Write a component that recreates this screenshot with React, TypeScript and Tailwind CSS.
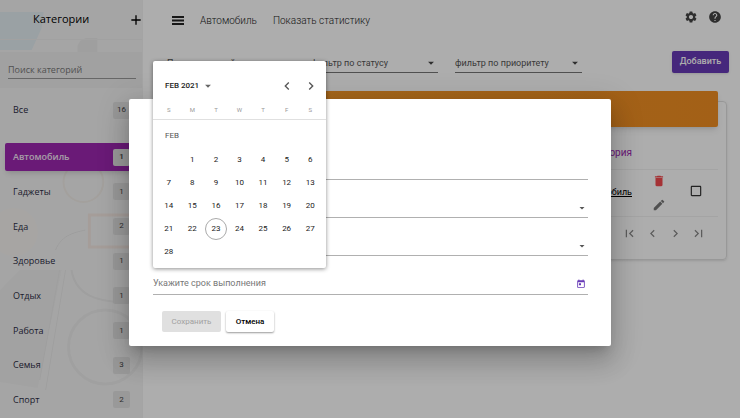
import React from "react";
import {
  MdAdd,
  MdArrowDropDown,
  MdCheckBoxOutlineBlank,
  MdChevronLeft,
  MdChevronRight,
  MdDelete,
  MdEdit,
  MdFirstPage,
  MdHelp,
  MdLastPage,
  MdSettings,
  MdToday,
} from "react-icons/md";

const categories = [
  { name: "Автомобиль", count: 1, active: true },
  { name: "Гаджеты", count: 1 },
  { name: "Еда", count: 2 },
  { name: "Здоровье", count: 1 },
  { name: "Отдых", count: 1 },
  { name: "Работа", count: 1 },
  { name: "Семья", count: 3 },
  { name: "Спорт", count: 2 },
];

const days = Array.from({ length: 28 }, (_, i) => i + 1);

function Count({ value }: { value: number }) {
  return (
    <span className="flex h-[17px] w-[17px] items-center justify-center rounded-xs bg-[#e2e2e2] font-[Roboto,sans-serif] text-[8px] text-[#444]">
      {value}
    </span>
  );
}

function SidebarArt() {
  return (
    <svg
      className="absolute inset-0 h-full w-full"
      viewBox="0 0 143 418"
      preserveAspectRatio="none"
      fill="none"
      aria-hidden="true"
    >
      <path d="M0 12h44l-2 16-10 22H0z" fill="#e4eef2" />
      <path d="M78 46c2-6 6-8 10-8h10v14H78z" fill="#ebebeb" />
      <path d="M20 270h42L38 388 0 382V290z" fill="#efefef" />
      <path d="M66 270L46 390M60 270L40 380" stroke="#eaeaea" />
      <path d="M143 215H90v32h53" stroke="#f4e7e2" strokeWidth="3" />
      <path d="M72 270c4 24 24 33 58 32" stroke="#eaeaea" strokeWidth="2" />
      <circle cx="106" cy="347" r="37" stroke="#ececec" strokeWidth="3" />
      <path d="M56 250c6-16 22-18 30-20" stroke="#e8e8e8" />
      <circle cx="84" cy="182" r="20" stroke="#f0ece7" strokeWidth="2" />
      <circle cx="14" cy="232" r="24" fill="#f6f4f0" />
    </svg>
  );
}

function Sidebar() {
  return (
    <aside className="relative w-[143px] shrink-0 overflow-hidden border-r border-[#f2f2f2] bg-[#f4f4f4] font-['Open_Sans','Noto_Sans',sans-serif] text-[#2c2c44]">
      <SidebarArt />
      <div className="relative">
        <div className="flex h-10 items-center justify-between border-b border-[#eeeeee] pl-[33px]">
          <h1 className="text-[11px] font-normal text-black">Категории</h1>
          <button aria-label="Добавить категорию" className="-mr-0.5 text-black">
            <MdAdd className="h-4 w-4" />
          </button>
        </div>
        <div className="mt-3 h-9 bg-[#eeeeee] px-2">
          <input
            aria-label="Поиск категорий"
            placeholder="Поиск категорий"
            className="h-[27px] w-32 border-b border-[#999] bg-transparent pt-2 text-[9px] outline-none placeholder:text-[#777]"
          />
        </div>
        <a href="#all" className="mt-2 flex h-7 items-center justify-between pr-[12px] pl-[13px] text-[9px]">
          Все <Count value={16} />
        </a>
        <nav className="mt-[19px] flex h-[271px] flex-col justify-between pr-1 pl-[5px]">
          {categories.map((c) => (
            <a
              key={c.name}
              href={"#" + c.name}
              className={
                c.active
                  ? "flex h-7 items-center justify-between rounded-xs bg-[#9c27b0] pr-2 pl-2 text-[9px] font-semibold text-[#f4e6f6] shadow-md"
                  : "flex h-7 items-center justify-between pr-2 pl-2 text-[9px]"
              }
            >
              {c.name}
              <Count value={c.count} />
            </a>
          ))}
        </nav>
      </div>
    </aside>
  );
}

function Filter({ label }: { label: string }) {
  return (
    <div className="relative w-[127px] border-b border-[#777]">
      <select
        aria-label={label}
        className="block h-[18px] w-full appearance-none bg-transparent text-[9px] leading-[18px] text-[#555] outline-none"
      >
        <option>{label}</option>
      </select>
      <MdArrowDropDown className="pointer-events-none absolute top-[2px] right-0 h-[14px] w-[14px] text-[#444]" />
    </div>
  );
}

function MenuIcon() {
  return (
    <svg viewBox="0 0 12 9" className="h-[9px] w-3" fill="currentColor" aria-hidden="true">
      <path d="M0 0h12v2H0zM0 3.5h12v2H0zM0 7h12v2H0z" />
    </svg>
  );
}

function Main() {
  return (
    <main className="flex-1 overflow-hidden pr-[13px] pl-4">
      <header className="flex h-10 items-center gap-4 pl-[13px] text-[10px] font-light text-[#222]">
        <button aria-label="Меню" className="text-[#222]">
          <MenuIcon />
        </button>
        <span>Автомобиль</span>
        <a href="#stats">Показать статистику</a>
        <div className="ml-auto flex gap-2.5 pr-[5px] pb-[7px] text-[#444]">
          <button aria-label="Настройки">
            <MdSettings className="h-3.5 w-3.5" />
          </button>
          <button aria-label="Помощь">
            <MdHelp className="h-3.5 w-3.5" />
          </button>
        </div>
      </header>

      <div className="flex h-[33px] items-end gap-[17px] pl-2">
        <input
          aria-label="Поиск значений"
          placeholder="Поиск значений"
          className="h-[19px] w-[127px] border-b border-[#777] bg-transparent text-[9px] outline-none placeholder:text-[#555]"
        />
        <Filter label="фильтр по статусу" />
        <Filter label="фильтр по приоритету" />
        <button className="-mr-0.5 ml-auto h-[22px] w-[57px] rounded-xs bg-[#673ab7] text-[9px] font-medium text-white shadow-sm">
          Добавить
        </button>
      </div>

      <section className="mt-7 rounded-sm border border-[#e0e0e0] px-2 shadow-sm">
        <div className="-mt-[11px] h-9 rounded-xs bg-linear-to-r from-[#f39a2b] to-[#f18e22] shadow-md" />
        <table className="w-full text-[10px]">
          <thead>
            <tr className="h-[42px] border-b border-[#f2f2f2] text-[#9c27b0]">
              <th className="pt-2.5 text-right font-normal">Категория</th>
              <th className="w-[54px]" />
              <th className="w-8" />
            </tr>
          </thead>
          <tbody>
            <tr className="h-[47px] border-b border-[#f2f2f2]">
              <td className="text-right text-[9px] text-black underline">Автомобиль</td>
              <td>
                <div className="flex flex-col items-center gap-2.5">
                  <button aria-label="Удалить">
                    <MdDelete className="h-3.5 w-3.5 text-[#f44a4f]" />
                  </button>
                  <button aria-label="Изменить">
                    <MdEdit className="h-3.5 w-3.5 text-[#777]" />
                  </button>
                </div>
              </td>
              <td>
                <button aria-label="Выполнено" className="block pb-1 pl-[3px]">
                  <MdCheckBoxOutlineBlank className="h-3.5 w-3.5 text-[#333]" />
                </button>
              </td>
            </tr>
          </tbody>
        </table>
        <div className="flex h-[42px] items-center justify-end gap-2 pr-3 pb-2 text-[#888]">
          <button aria-label="Первая страница"><MdFirstPage className="h-[15px] w-[15px]" /></button>
          <button aria-label="Предыдущая страница"><MdChevronLeft className="h-[15px] w-[15px]" /></button>
          <button aria-label="Следующая страница"><MdChevronRight className="h-[15px] w-[15px]" /></button>
          <button aria-label="Последняя страница"><MdLastPage className="h-[15px] w-[15px]" /></button>
        </div>
      </section>
    </main>
  );
}

function DialogSelect({ label }: { label: string }) {
  return (
    <div className="relative mt-[18px] border-b border-[#b0b0b0]">
      <select aria-label={label} className="block h-[19px] w-full appearance-none outline-none" />
      <MdArrowDropDown className="pointer-events-none absolute right-0 bottom-[3px] h-3 w-3 text-[#555]" />
    </div>
  );
}

function Calendar() {
  return (
    <div className="absolute bottom-[78px] left-6 h-[207px] w-[173px] rounded-xs bg-white text-[8px] text-[#222] shadow-[0_1px_4px_rgba(0,0,0,0.45)]">
      <div className="flex h-[46px] items-center pt-[3px] pr-[7px] pl-3">
        <button type="button" className="flex items-center font-medium">
          FEB 2021
          <MdArrowDropDown className="ml-0.5 h-3.5 w-3.5 text-[#666]" />
        </button>
        <button type="button" aria-label="Предыдущий месяц" className="ml-auto text-[#555]">
          <MdChevronLeft className="h-4 w-4" />
        </button>
        <button type="button" aria-label="Следующий месяц" className="ml-2 text-[#555]">
          <MdChevronRight className="h-4 w-4" />
        </button>
      </div>
      <div className="grid h-[13px] grid-cols-7 border-b border-[#e0e0e0] px-1 text-center text-[6px] leading-none text-[#999]">
        {["S", "M", "T", "W", "T", "F", "S"].map((d, i) => (
          <span key={i}>{d}</span>
        ))}
      </div>
      <div className="px-3 pt-2.5 leading-3 text-[#555]">FEB</div>
      <div className="grid grid-cols-7 px-1 pt-1.5">
        {days.map((d) => (
          <button
            key={d}
            type="button"
            className={
              d === 1
                ? "col-start-2 flex h-[23px] items-center justify-center"
                : "flex h-[23px] items-center justify-center"
            }
          >
            {d === 23 ? (
              <span className="flex h-[22px] w-[22px] shrink-0 items-center justify-center rounded-full border border-[#aaa]">
                {d}
              </span>
            ) : (
              d
            )}
          </button>
        ))}
      </div>
    </div>
  );
}

function TaskDialog() {
  return (
    <div className="absolute inset-0 flex items-start bg-black/32 px-[129px] pt-[99px]">
      <form
        role="dialog"
        aria-label="Задача"
        className="relative flex-1 rounded-xs bg-white pt-[61px] pr-[23px] pb-[14px] pl-6 shadow-[0_7px_10px_-5px_rgba(0,0,0,0.2),0_16px_25px_2px_rgba(0,0,0,0.14),0_6px_31px_5px_rgba(0,0,0,0.12)]"
      >
        <input aria-label="Название" className="block h-5 w-full border-b border-[#b0b0b0] outline-none" />
        <DialogSelect label="Категория" />
        <DialogSelect label="Приоритет" />
        <div className="mt-[18px] flex h-[21px] items-center border-b border-[#b0b0b0] pr-[2px]">
          <input
            aria-label="Укажите срок выполнения"
            placeholder="Укажите срок выполнения"
            className="min-w-0 flex-1 text-[9px] outline-none placeholder:text-[#777]"
          />
          <button type="button" aria-label="Открыть календарь" className="text-[#673ab7]">
            <MdToday className="h-2.5 w-2.5" />
          </button>
        </div>
        <div className="mt-4 flex gap-[5px] pl-[9px] text-[8px]">
          <button type="button" disabled className="h-[21px] w-[59px] rounded-xs bg-[#e0e0e0] text-[#a0a0a0]">
            Сохранить
          </button>
          <button type="button" className="h-[21px] w-12 rounded-xs bg-white font-medium text-black shadow-[0_1px_2px_rgba(0,0,0,0.4)]">
            Отмена
          </button>
        </div>
        <Calendar />
      </form>
    </div>
  );
}

export default function App() {
  return (
    <div className="relative flex min-h-screen overflow-hidden bg-white font-[Roboto,sans-serif]">
      <Sidebar />
      <Main />
      <TaskDialog />
    </div>
  );
}
